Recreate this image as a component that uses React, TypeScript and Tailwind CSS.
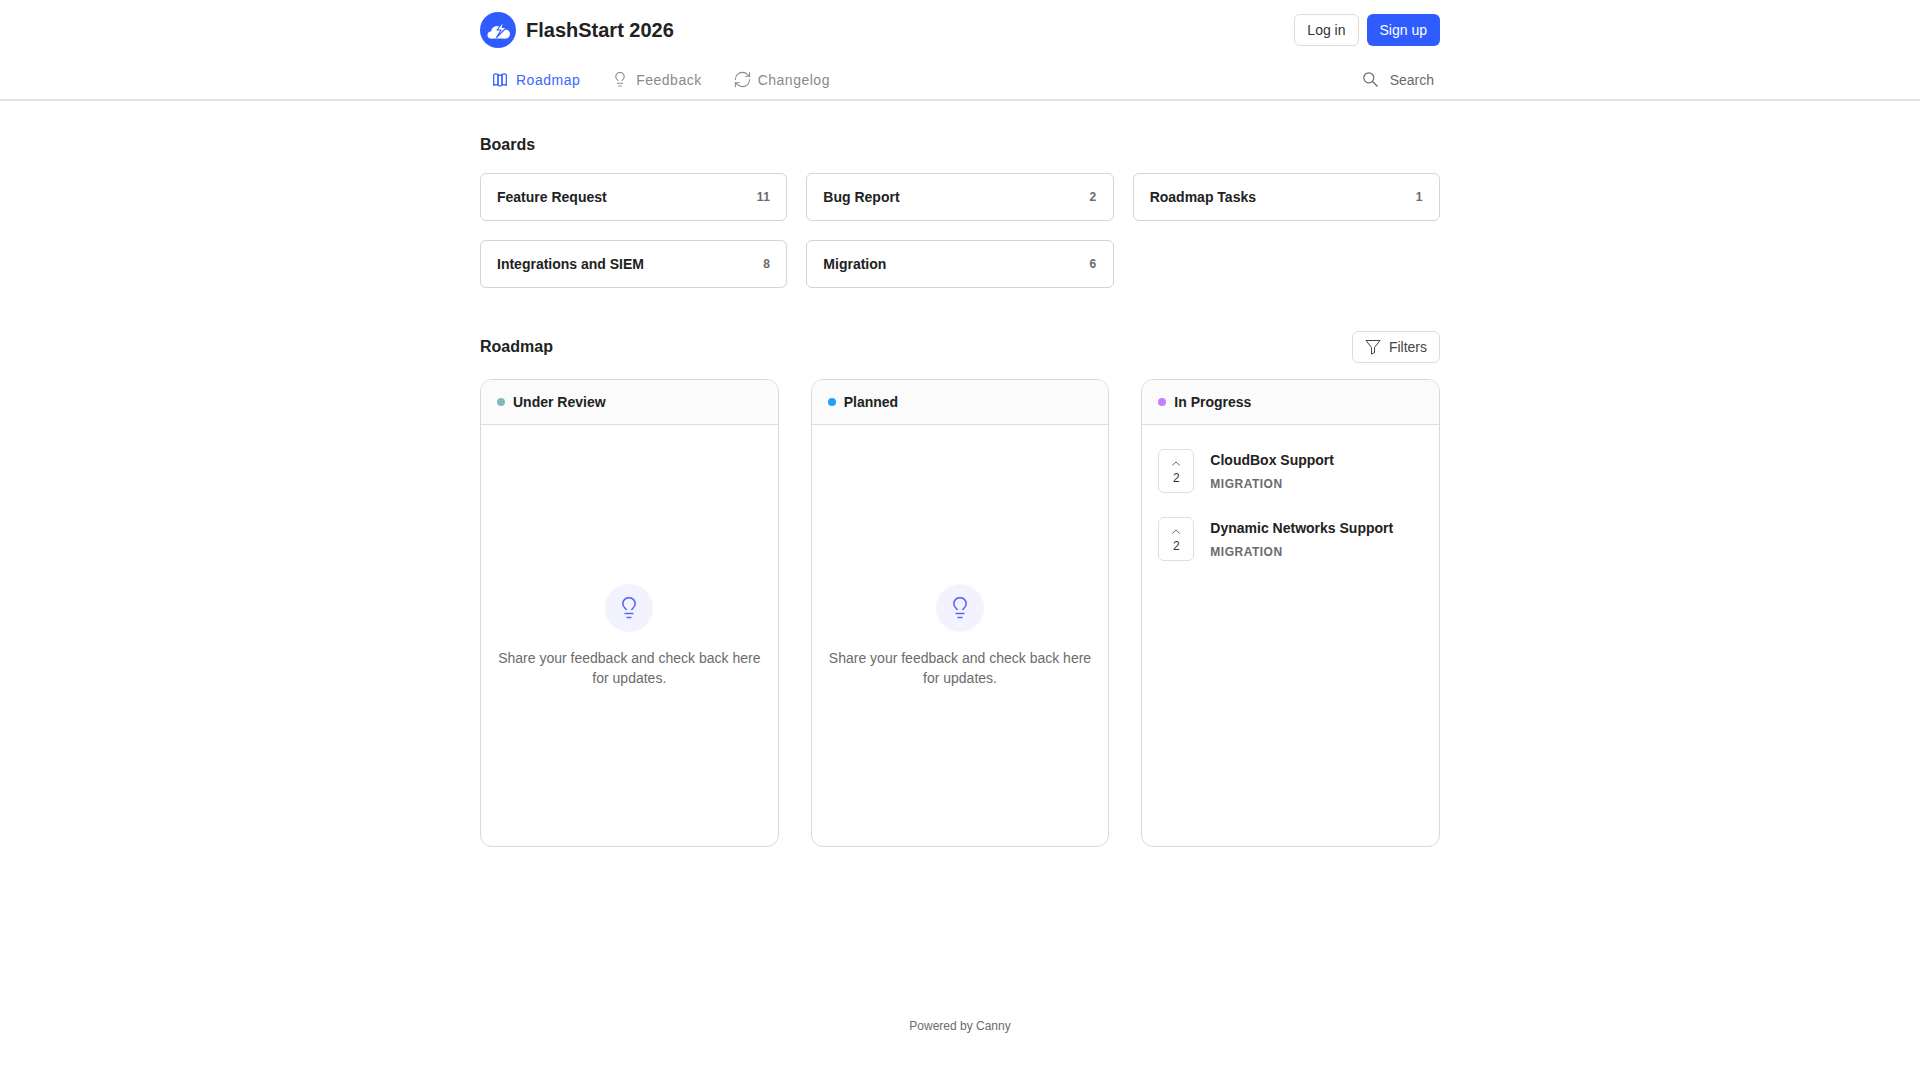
import { RefreshCw } from 'lucide-react';

const boards = [
  { name: 'Feature Request', count: 11 },
  { name: 'Bug Report', count: 2 },
  { name: 'Roadmap Tasks', count: 1 },
  { name: 'Integrations and SIEM', count: 8 },
  { name: 'Migration', count: 6 },
];

const posts = ['CloudBox Support', 'Dynamic Networks Support'];

const Logo = () => (
  <svg viewBox="0 0 36 36" className="w-9 h-9 shrink-0">
    <circle cx="18" cy="18" r="18" fill="#2f5cff" />
    <g fill="#fff">
      <circle cx="11" cy="23" r="3.500" />
      <circle cx="17" cy="20" r="6" />
      <circle cx="25.500" cy="22" r="4.500" />
      <rect x="11" y="22" width="14.500" height="4.500" />
    </g>
    <path d="M24 9L17 18h4l-4.500 7.500 10-10h-4.300L24 9z" fill="#fff" stroke="#2f5cff" strokeWidth="1.100" strokeLinejoin="round" />
  </svg>
);

const MapIcon = () => (
  <svg viewBox="0 0 14 14" fill="none" stroke="currentColor" strokeWidth="1.300" strokeLinejoin="round" className="w-[14px] h-[14px] shrink-0">
    <path d="M.7 1.700C2 .8 3.600.7 5 1.600v10.700c-1.400-.9-3-.8-4.300.100V1.700z" />
    <path d="M5 1.600c1.200.8 2.800.8 4 0v10.700c-1.200.8-2.800.8-4 0V1.600z" />
    <path d="M9 1.600c1.400-.9 3-.8 4.300.100v10.700c-1.300-.9-2.900-1-4.300-.100V1.600z" />
  </svg>
);

const Bulb = ({ className }: { className: string }) => (
  <svg viewBox="0 0 14 22" fill="none" stroke="currentColor" strokeWidth="1.600" className={className}>
    <path d="M4.500 13C3.800 11.500.8 10.300.8 6.800a6.200 6.200 0 0 1 12.400 0c0 3.500-3 4.700-3.700 6.200" />
    <path d="M2.500 16.500h9M4.500 20.500h5" />
  </svg>
);

const Funnel = () => (
  <svg viewBox="0 0 16 16" fill="none" stroke="currentColor" strokeWidth="1" strokeLinejoin="round" className="w-4 h-4 shrink-0">
    <path d="M1 1.500h14L9.500 8.500v5.200l-3 1.300V8.500L1 1.500z" />
  </svg>
);

const SearchIcon = () => (
  <svg viewBox="0 0 15 15" fill="none" stroke="currentColor" strokeWidth="1.200" className="w-[15px] h-[15px] shrink-0">
    <circle cx="5.800" cy="5.800" r="5" />
    <path d="M9.500 9.500l5 5" />
  </svg>
);

const EmptyState = () => (
  <div className="flex-1 flex flex-col items-center justify-center px-4">
    <div className="w-12 h-12 rounded-full bg-[#f2f3ff] flex items-center justify-center text-[#5b67f5]">
      <Bulb className="w-[14px] h-[22px] mt-px" />
    </div>
    <p className="mt-4 text-sm leading-5 text-[#6b6b6b] text-center">
      Share your feedback and check back here for updates.
    </p>
  </div>
);

const Column = ({ title, dot, children }: { title: string; dot: string; children: React.ReactNode }) => (
  <div className="flex flex-col border border-[#d9d9d9] rounded-xl overflow-hidden h-[468px]">
    <div className="h-[45px] shrink-0 flex items-center gap-2 px-4 bg-[#fbfbfb] border-b border-[#dedede]">
      <span className={`w-2 h-2 rounded-full ${dot}`} />
      <span className="text-sm font-bold text-[#222]">{title}</span>
    </div>
    {children}
  </div>
);

const App = () => {
  return (
    <div className="min-h-screen bg-white font-['Liberation_Sans',sans-serif] text-[#222]">
      <header className="border-b-2 border-[#e3e3e3] h-[101px]">
        <div className="w-[960px] mx-auto">
          <div className="h-[60px] flex items-center justify-between">
            <div className="flex items-center gap-[10px]">
              <Logo />
              <span className="text-xl font-bold">FlashStart 2026</span>
            </div>
            <div className="flex items-center gap-2">
              <button className="h-8 px-3 border border-[#dcdcdc] rounded-md text-sm text-[#333] bg-white">Log in</button>
              <button className="h-8 px-[13px] rounded-md text-sm text-white bg-[#2f5cff]">Sign up</button>
            </div>
          </div>
          <nav className="h-[39px] flex items-center justify-between">
            <div className="flex items-center text-sm tracking-[0.5px]">
              <a className="flex items-center gap-[9px] pl-[13px] pr-[18px] text-[#3b66ff]">
                <MapIcon />
                Roadmap
              </a>
              <a className="flex items-center gap-[11px] pl-[17px] pr-[16px] text-[#8a8a8a]">
                <Bulb className="w-[10px] h-[15px]" />
                Feedback
              </a>
              <a className="flex items-center gap-[8px] px-[17px] text-[#8a8a8a]">
                <RefreshCw className="w-[19px] h-[19px] -mx-[2px]" strokeWidth={1.300} />
                Changelog
              </a>
            </div>
            <div className="flex items-center gap-[12px] pr-[6px] text-sm text-[#6b6b6b]">
              <SearchIcon />
              Search
            </div>
          </nav>
        </div>
      </header>

      <main className="w-[960px] mx-auto">
        <h2 className="mt-[34px] text-base leading-5 font-bold">Boards</h2>
        <div className="mt-[18px] grid grid-cols-3 gap-[19px]">
          {boards.map((b) => (
            <div key={b.name} className="h-12 px-4 flex items-center justify-between border border-[#d5d5d5] rounded-md">
              <span className="text-sm font-bold text-[#222]">{b.name}</span>
              <span className="text-xs font-bold tracking-[0.5px] text-[#6b6b6b]">{b.count}</span>
            </div>
          ))}
        </div>

        <div className="mt-[43px] h-8 flex items-center justify-between">
          <h2 className="text-base font-bold">Roadmap</h2>
          <button className="h-8 px-3 flex items-center gap-[8px] border border-[#dcdcdc] rounded-md text-sm text-[#444]">
            <Funnel />
            Filters
          </button>
        </div>

        <div className="mt-4 grid grid-cols-3 gap-8">
          <Column title="Under Review" dot="bg-[#85b8b8]">
            <EmptyState />
          </Column>
          <Column title="Planned" dot="bg-[#1fa0ff]">
            <EmptyState />
          </Column>
          <Column title="In Progress" dot="bg-[#c77dff]">
            <div className="pt-6 px-4 flex flex-col gap-6">
              {posts.map((p) => (
                <div key={p} className="flex items-center gap-4">
                  <div className="w-9 h-[44px] shrink-0 flex flex-col items-center pt-[11px] border border-[#dedede] rounded-md">
                    <svg viewBox="0 0 8 5" fill="none" stroke="#555" strokeWidth="0.900" className="w-2 h-[5px]">
                      <path d="M.4 4.500L4 .9l3.600 3.600" />
                    </svg>
                    <span className="mt-[5px] text-xs leading-[14px] text-[#333]">2</span>
                  </div>
                  <div>
                    <div className="text-sm leading-5 font-bold text-[#222]">{p}</div>
                    <div className="mt-[6px] text-xs leading-4 font-bold tracking-[0.5px] text-[#6b6b6b]">MIGRATION</div>
                  </div>
                </div>
              ))}
            </div>
          </Column>
        </div>

        <footer className="mt-[171px] text-center text-xs leading-4 text-[#6b6b6b]">Powered by Canny</footer>
      </main>
    </div>
  );
};

export default App;
